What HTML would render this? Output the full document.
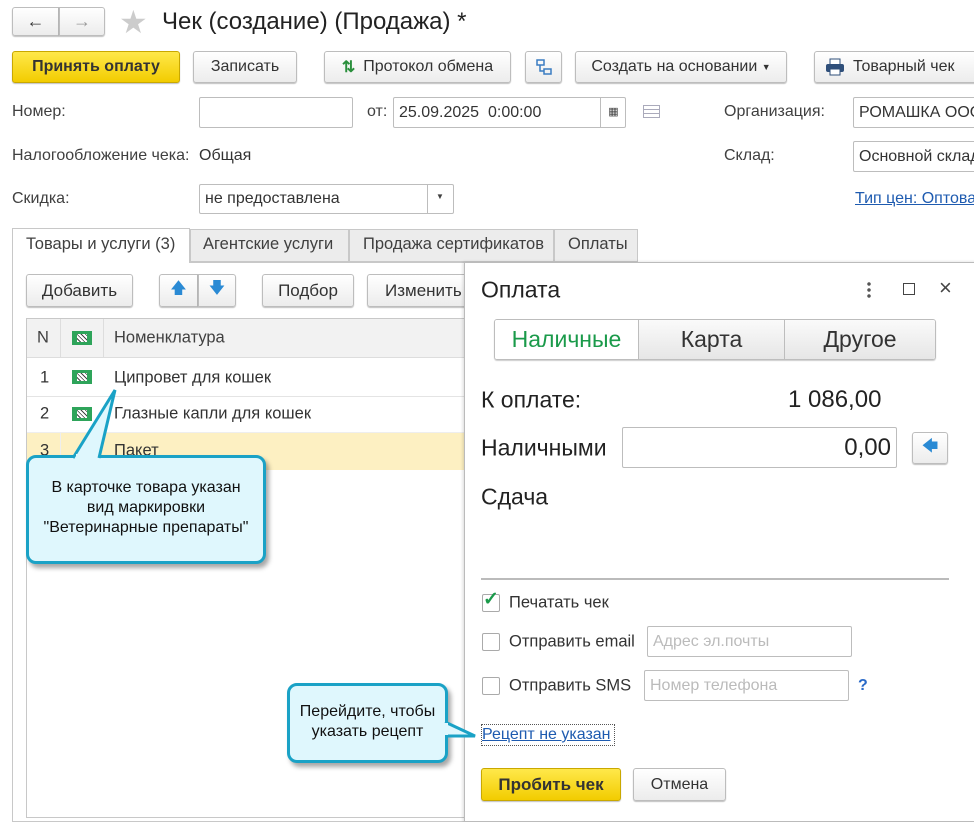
<!DOCTYPE html>
<html><head><meta charset="utf-8"><style>
*{box-sizing:border-box;margin:0;padding:0}
body{width:974px;height:817px;overflow:hidden;background:#fff;font-family:"Liberation Sans",Arial,sans-serif;font-size:16px;color:#404040;position:relative}
.a{position:absolute}
.btn{position:absolute;border:1px solid #bdbdbd;border-radius:3px;background:linear-gradient(#fff,#ececec);box-shadow:0 1px 1px rgba(0,0,0,.25);display:flex;align-items:center;justify-content:center;color:#333;font-size:16px;white-space:nowrap}
.yel{background:linear-gradient(#ffe84a,#f2cc00);border-color:#c9a800;font-weight:bold;color:#333}
.inp{position:absolute;border:1px solid #bdbdbd;border-radius:2px;background:#fff;display:flex;align-items:center;padding-left:5px;color:#333;white-space:nowrap;overflow:hidden}
.lbl{position:absolute;transform:translateY(-50%);white-space:nowrap}
.callout{position:absolute;background:#dff7fd;border:3px solid #1aa2c6;border-radius:10px;box-shadow:3px 4px 5px rgba(0,0,0,.35);text-align:center;color:#111;font-size:16px;line-height:20px}
.big{font-size:23px;color:#222}
</style></head><body>

<!-- nav -->
<div class="btn" style="left:12px;top:7px;width:47px;height:29px;border-radius:3px 0 0 3px;font-size:18px">&#8592;</div>
<div class="btn" style="left:59px;top:7px;width:46px;height:29px;border-radius:0 3px 3px 0;font-size:18px;color:#999">&#8594;</div>
<div class="a" style="left:119px;top:3px;font-size:32px;color:#ccc">&#9733;</div>
<div class="lbl" style="left:162px;top:22px;font-size:24px;color:#222">Чек (создание) (Продажа) *</div>

<!-- toolbar -->
<div class="btn yel" style="left:12px;top:51px;width:168px;height:32px">Принять оплату</div>
<div class="btn" style="left:193px;top:51px;width:104px;height:32px">Записать</div>
<div class="btn" style="left:324px;top:51px;width:187px;height:32px"><span style="color:#2a8f3c;font-weight:bold;margin-right:8px">&#8645;</span>Протокол обмена</div>
<div class="btn" style="left:525px;top:51px;width:37px;height:32px"><svg width="18" height="18"><rect x="2" y="2" width="7" height="5" fill="none" stroke="#3a7cc2" stroke-width="1.5"/><rect x="9" y="11" width="7" height="5" fill="none" stroke="#3a7cc2" stroke-width="1.5"/><path d="M5 7v6h4" fill="none" stroke="#3a7cc2" stroke-width="1.5"/></svg></div>
<div class="btn" style="left:575px;top:51px;width:212px;height:32px">Создать на основании&nbsp;<span style="font-size:9px">&#9660;</span></div>
<div class="btn" style="left:814px;top:51px;width:165px;height:32px;justify-content:flex-start;padding-left:10px"><svg width="20" height="18" style="margin-right:8px"><rect x="5" y="1" width="10" height="6" fill="#fff" stroke="#2f4f7a"/><rect x="1" y="6" width="18" height="8" rx="2" fill="#2f4f7a"/><rect x="5" y="11" width="10" height="6" fill="#fff" stroke="#2f4f7a"/></svg>Товарный чек</div>

<!-- fields -->
<div class="lbl" style="left:12px;top:112px">Номер:</div>
<div class="inp" style="left:199px;top:97px;width:154px;height:31px"></div>
<div class="lbl" style="left:367px;top:112px">от:</div>
<div class="inp" style="left:393px;top:97px;width:233px;height:31px">25.09.2025&nbsp;&nbsp;0:00:00</div>
<div class="a" style="left:600px;top:97px;width:26px;height:31px;border-left:1px solid #bdbdbd;text-align:center;line-height:30px;font-size:11px">&#9638;</div>
<div class="a" style="left:643px;top:105px;width:17px;height:13px;border:1px solid #aab;background:repeating-linear-gradient(#fff 0 3px,#aab 3px 4px)"></div>
<div class="lbl" style="left:724px;top:112px">Организация:</div>
<div class="inp" style="left:853px;top:97px;width:130px;height:31px">РОМАШКА ООО</div>

<div class="lbl" style="left:12px;top:156px">Налогообложение чека:</div>
<div class="lbl" style="left:199px;top:156px;color:#333">Общая</div>
<div class="lbl" style="left:724px;top:156px">Склад:</div>
<div class="inp" style="left:853px;top:141px;width:130px;height:31px">Основной склад</div>

<div class="lbl" style="left:12px;top:199px">Скидка:</div>
<div class="inp" style="left:199px;top:184px;width:255px;height:30px">не предоставлена</div>
<div class="a" style="left:427px;top:185px;width:1px;height:28px;background:#bdbdbd"></div>
<div class="a" style="left:436px;top:192px;font-size:8px">&#9660;</div>
<div class="lbl" style="left:855px;top:199px;color:#1e5bb0;text-decoration:underline">Тип цен: Оптовая</div>

<!-- tabs -->
<div class="a" style="left:12px;top:262px;width:470px;height:560px;border:1px solid #c8c8c8"></div>
<div class="a" style="left:12px;top:228px;width:178px;height:35px;border:1px solid #c8c8c8;border-bottom:none;background:#fff;padding:6px 0 0 13px;font-size:16.5px;white-space:nowrap">Товары и услуги (3)</div>
<div class="a" style="left:190px;top:229px;width:159px;height:33px;border:1px solid #c8c8c8;background:#ececec;padding:5px 0 0 12px;font-size:16.5px;white-space:nowrap;overflow:hidden">Агентские услуги</div>
<div class="a" style="left:349px;top:229px;width:205px;height:33px;border:1px solid #c8c8c8;background:#ececec;padding:5px 0 0 13px;font-size:16.5px;white-space:nowrap;overflow:hidden">Продажа сертификатов</div>
<div class="a" style="left:554px;top:229px;width:84px;height:33px;border:1px solid #c8c8c8;background:#ececec;padding:5px 0 0 13px;font-size:16.5px">Оплаты</div>

<div class="btn" style="left:26px;top:274px;width:107px;height:33px;font-size:17px">Добавить</div>
<div class="btn" style="left:159px;top:274px;width:39px;height:33px;border-radius:3px 0 0 3px;color:#2a8ad4;font-size:16px">&#129093;</div>
<div class="btn" style="left:198px;top:274px;width:38px;height:33px;border-radius:0 3px 3px 0;color:#2a8ad4;font-size:16px">&#129095;</div>
<div class="btn" style="left:262px;top:274px;width:92px;height:33px;font-size:17px">Подбор</div>
<div class="btn" style="left:367px;top:274px;width:110px;height:33px;font-size:17px;justify-content:flex-start;padding-left:17px">Изменить</div>

<!-- table -->
<div class="a" style="left:26px;top:318px;width:445px;height:500px;border:1px solid #c8c8c8;border-right:none"></div>
<div class="a" style="left:27px;top:319px;width:440px;height:39px;background:#f2f2f2;border-bottom:1px solid #ddd"></div>
<div class="a" style="left:60px;top:319px;width:1px;height:39px;background:#ddd"></div>
<div class="a" style="left:103px;top:319px;width:1px;height:39px;background:#ddd"></div>
<div class="lbl" style="left:37px;top:338px;font-size:16.5px">N</div>
<div class="lbl" style="left:114px;top:338px;font-size:16.5px">Номенклатура</div>
<div class="a" style="left:27px;top:396px;width:440px;height:1px;background:#e4e4e4"></div>
<div class="a" style="left:27px;top:432px;width:440px;height:38px;background:#fdf0c2;border-top:1px solid #eee"></div>
<div class="a" style="left:60px;top:432px;width:1px;height:38px;background:#eee"></div>
<div class="lbl" style="left:40px;top:378px;color:#333;font-size:16.5px">1</div>
<div class="lbl" style="left:40px;top:414px;color:#333;font-size:16.5px">2</div>
<div class="lbl" style="left:40px;top:451px;color:#333;font-size:16.5px">3</div>
<div class="lbl" style="left:114px;top:378px;color:#333;font-size:16.5px">Ципровет для кошек</div>
<div class="lbl" style="left:114px;top:414px;color:#333;font-size:16.5px">Глазные капли для кошек</div>
<div class="lbl" style="left:114px;top:451px;color:#333;font-size:16.5px">Пакет</div>
<div class="a" style="left:72px;top:331px;width:20px;height:14px;background:#2ea45a;border:3px solid #2ea45a;border-left-width:5px;border-right-width:5px"><div style="height:100%;background:repeating-linear-gradient(45deg,#fff 0 2px,#444 2px 3px)"></div></div>
<div class="a" style="left:72px;top:370px;width:20px;height:14px;background:#2ea45a;border:3px solid #2ea45a;border-left-width:5px;border-right-width:5px"><div style="height:100%;background:repeating-linear-gradient(45deg,#fff 0 2px,#444 2px 3px)"></div></div>
<div class="a" style="left:72px;top:407px;width:20px;height:14px;background:#2ea45a;border:3px solid #2ea45a;border-left-width:5px;border-right-width:5px"><div style="height:100%;background:repeating-linear-gradient(45deg,#fff 0 2px,#444 2px 3px)"></div></div>

<!-- callout 1 -->
<div class="callout" style="left:26px;top:455px;width:240px;height:109px;padding-top:20px">В карточке товара указан<br>вид маркировки<br>"Ветеринарные препараты"</div>
<svg class="a" style="left:65px;top:388px" width="60" height="72"><path d="M8 70 L50 2 L34 70" fill="#dff7fd" stroke="#1aa2c6" stroke-width="3"/><rect x="11" y="66" width="20" height="8" fill="#dff7fd"/></svg>

<!-- dialog -->
<div class="a" style="left:464px;top:262px;width:520px;height:560px;background:#fff;border:1px solid #bbb;box-shadow:-1px 0 3px rgba(0,0,0,.15)"></div>
<div class="lbl big" style="left:481px;top:290px">Оплата</div>
<div class="a" style="left:867px;top:281px;width:4px;height:18px;background:radial-gradient(circle,#555 1.5px,transparent 2px) 0 0/4px 6px"></div>
<div class="a" style="left:903px;top:283px;width:12px;height:12px;border:1.5px solid #444"></div>
<div class="a" style="left:939px;top:275px;font-size:22px;color:#444">&#215;</div>

<div class="a" style="left:494px;top:319px;width:442px;height:41px;border:1px solid #bdbdbd;border-radius:3px;box-shadow:0 1px 1px rgba(0,0,0,.2);display:flex;overflow:hidden;font-size:23px">
<div style="width:144px;background:#fff;color:#1a9a4a;display:flex;align-items:center;justify-content:center;border-right:1px solid #bdbdbd">Наличные</div>
<div style="width:146px;background:linear-gradient(#fafafa,#e6e6e6);color:#333;display:flex;align-items:center;justify-content:center;border-right:1px solid #bdbdbd">Карта</div>
<div style="flex:1;background:linear-gradient(#fafafa,#e6e6e6);color:#333;display:flex;align-items:center;justify-content:center">Другое</div>
</div>

<div class="lbl big" style="left:481px;top:400px">К оплате:</div>
<div class="lbl big" style="left:788px;top:400px;font-size:24px">1 086,00</div>
<div class="lbl big" style="left:481px;top:448px">Наличными</div>
<div class="inp" style="left:622px;top:427px;width:275px;height:41px;justify-content:flex-end;padding-right:5px;font-size:24px;color:#222">0,00</div>
<div class="btn" style="left:912px;top:432px;width:36px;height:32px;color:#2a8ad4;font-size:16px">&#129092;</div>
<div class="lbl big" style="left:481px;top:497px">Сдача</div>
<div class="a" style="left:481px;top:578px;width:468px;height:2px;background:#bbb"></div>

<div class="a" style="left:482px;top:594px;width:18px;height:18px;border:1px solid #aaa;border-radius:2px"></div>
<div class="a" style="left:483px;top:588px;font-size:19px;color:#1a9a4a;font-weight:bold">&#10003;</div>
<div class="lbl" style="left:509px;top:603px;color:#333;font-size:16.5px">Печатать чек</div>
<div class="a" style="left:482px;top:633px;width:18px;height:18px;border:1px solid #aaa;border-radius:2px"></div>
<div class="lbl" style="left:509px;top:642px;color:#333;font-size:16.5px">Отправить email</div>
<div class="inp" style="left:647px;top:626px;width:205px;height:31px;color:#bbb">Адрес эл.почты</div>
<div class="a" style="left:482px;top:677px;width:18px;height:18px;border:1px solid #aaa;border-radius:2px"></div>
<div class="lbl" style="left:509px;top:686px;color:#333;font-size:16.5px">Отправить SMS</div>
<div class="inp" style="left:644px;top:670px;width:205px;height:31px;color:#bbb">Номер телефона</div>
<div class="lbl" style="left:858px;top:686px;color:#2a6ac8;font-weight:bold">?</div>

<div class="a" style="left:481px;top:724px;width:134px;height:22px;border:1px dotted #555;color:#1e5bb0;text-decoration:underline;font-size:16px;line-height:20px;white-space:nowrap;overflow:hidden">Рецепт не указан</div>

<div class="btn yel" style="left:481px;top:768px;width:140px;height:33px;font-size:17px">Пробить чек</div>
<div class="btn" style="left:633px;top:768px;width:93px;height:33px">Отмена</div>

<!-- callout 2 -->
<div class="callout" style="left:287px;top:683px;width:161px;height:80px;padding-top:16px">Перейдите, чтобы<br>указать рецепт</div>
<svg class="a" style="left:443px;top:718px" width="36" height="30"><path d="M2 4 L32 18 L2 18" fill="#dff7fd" stroke="#1aa2c6" stroke-width="3"/><rect x="0" y="5" width="5" height="12" fill="#dff7fd"/></svg>

</body></html>
